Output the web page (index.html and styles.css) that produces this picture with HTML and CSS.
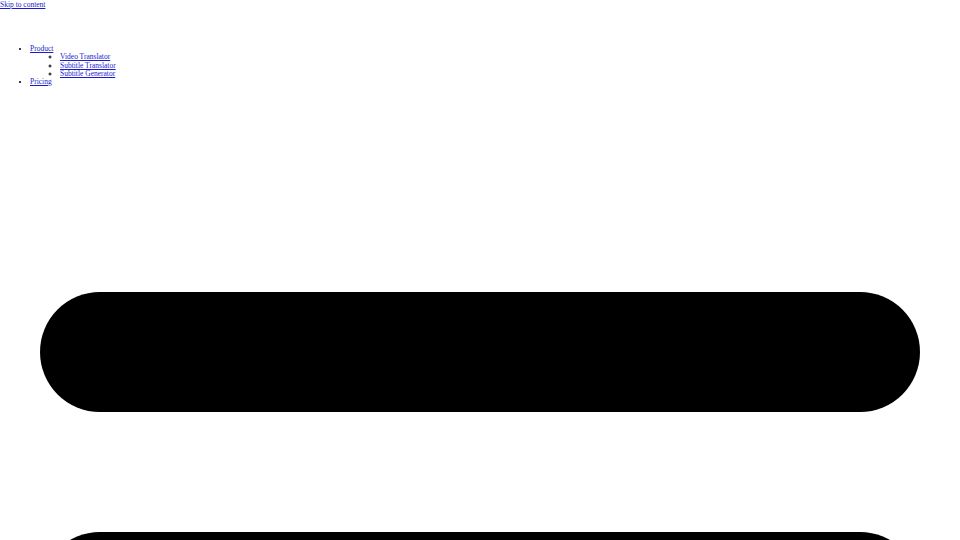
FILE: index.html
```html
<!DOCTYPE html>
<html lang="en">
<head>
<meta charset="utf-8">
<title>Page</title>
<link rel="stylesheet" href="styles.css">
</head>
<body>
<a class="skip" href="#content">Skip to content</a>
<header class="site-header">
  <ul class="nav">
    <li><a href="#">Product</a>
      <ul class="sub">
        <li><a href="#">Video Translator</a></li>
        <li><a href="#">Subtitle Translator</a></li>
        <li><a href="#">Subtitle Generator</a></li>
      </ul>
    </li>
    <li><a href="#">Pricing</a></li>
  </ul>
</header>
<main id="content" class="content">
  <div class="pill"></div>
  <div class="pill"></div>
</main>
</body>
</html>
```
FILE: styles.css
```css
html, body {
  margin: 0;
  padding: 0;
  background: #ffffff;
}
body {
  font-family: "Liberation Serif", "Times New Roman", serif;
  font-size: 7.5px;
  line-height: 8.25px;
  color: #000;
}
a {
  color: #1a1ad0;
  text-decoration: underline;
}
.skip {
  display: block;
  height: 8.5px;
  padding-top: 0.5px;
}
.site-header {
  height: 283px;
  padding-top: 36px;
  box-sizing: border-box;
}
.nav {
  margin: 0;
  padding-left: 30px;
  list-style: disc;
}
.sub {
  margin: 0;
  padding-left: 30px;
  list-style: circle;
}
.content {
  display: flex;
  flex-direction: column;
  gap: 120px;
  padding: 0 40px;
}
.pill {
  height: 120px;
  border-radius: 60px;
  background: #000;
  flex-shrink: 0;
}
```
